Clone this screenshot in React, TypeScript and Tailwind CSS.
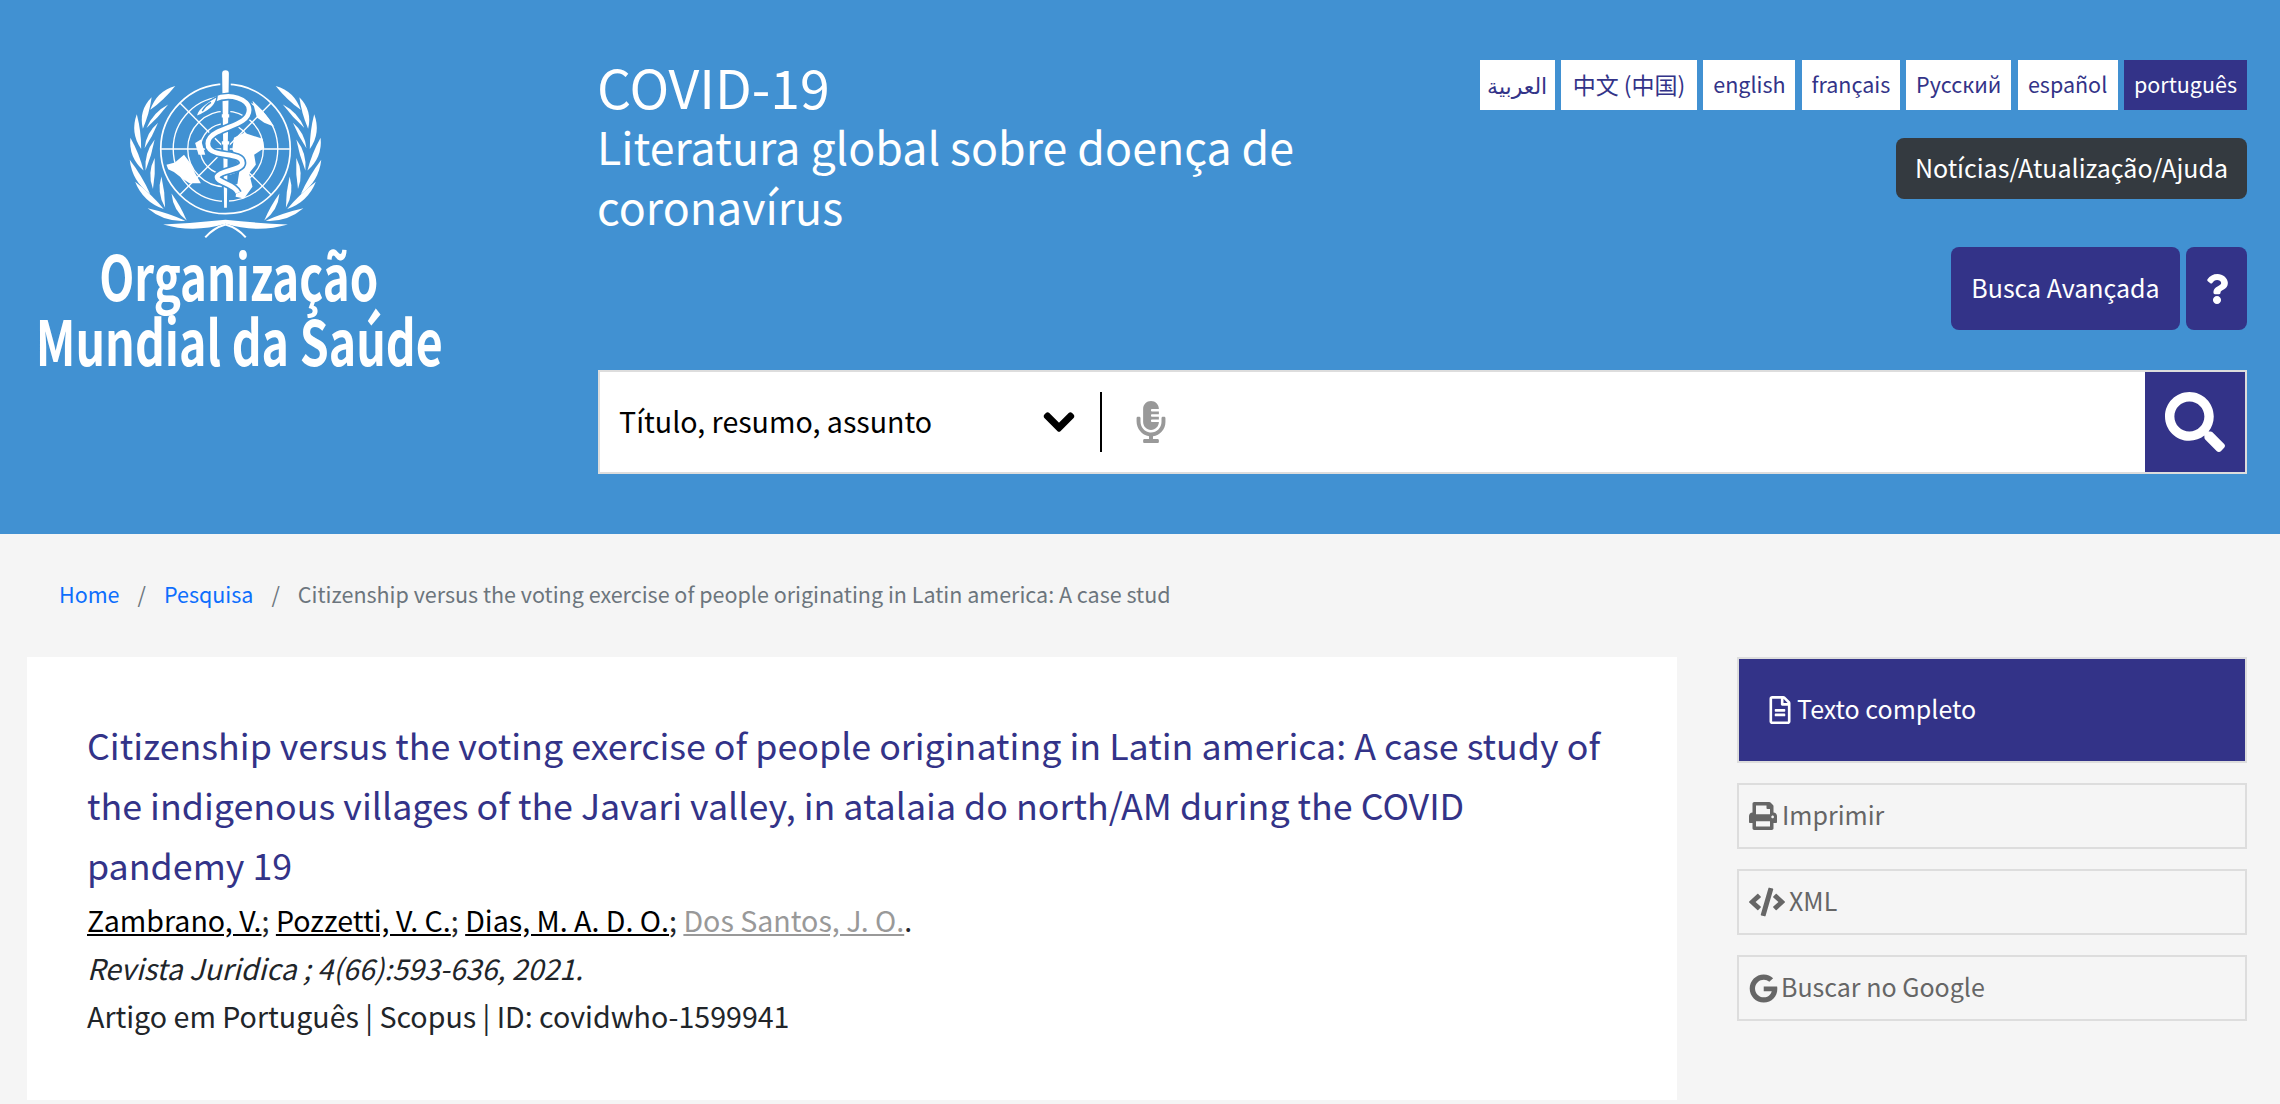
import React from "react";
import {
  FaChevronDown,
  FaCode,
  FaGoogle,
  FaMicrophoneAlt,
  FaPrint,
  FaQuestion,
  FaRegFileAlt,
  FaSearch,
} from "react-icons/fa";

const languages = [
  { name: "العربية", cls: "w-[75px] text-[22px]" },
  { name: "中文 (中国)", cls: "w-[136px] text-[23px]" },
  { name: "english", cls: "w-[92px] text-[21.5px]" },
  { name: "français", cls: "w-[98px] text-[21.5px]" },
  { name: "Русский", cls: "w-[105px] text-[21.5px]" },
  { name: "español", cls: "w-[100px] text-[21.5px]" },
];

// [base x, base y, tip x, tip y, half width] for the left branch
const leaves = [
  [452, 212, 526, 141, 17],
  [430, 268, 456, 175, 17],
  [425, 328, 412, 225, 17],
  [432, 392, 393, 295, 17],
  [452, 462, 391, 360, 17],
  [492, 506, 407, 425, 17],
  [556, 541, 444, 504, 15],
  [441, 266, 505, 196, 11],
  [435, 326, 475, 250, 11],
  [438, 392, 465, 300, 12],
  [460, 447, 465, 355, 13],
  [496, 502, 485, 410, 13],
  [560, 540, 515, 460, 13],
];

const leafPath = ([bx, by, tx, ty, w]: number[]) => {
  const mx = (bx + tx) / 2;
  const my = (by + ty) / 2;
  const len = Math.hypot(tx - bx, ty - by);
  const nx = ((ty - by) / len) * w;
  const ny = (-(tx - bx) / len) * w;
  return `M${bx} ${by} Q${mx + nx * 1.6} ${my + ny * 1.6} ${tx} ${ty} Q${mx - nx * 0.4} ${my - ny * 0.4} ${bx} ${by}Z`;
};

const Laurel = () => (
  <g fill="#fff">
    {leaves.map((l) => (
      <path key={l.join("-")} d={leafPath(l)} />
    ))}
  </g>
);

const snake =
  "M640 182 C690 160 745 180 745 212 C745 250 690 258 650 278 C615 296 612 330 650 340 C680 348 725 345 725 370 C725 392 660 390 650 410 C648 428 700 430 712 458";

const WhoEmblem = () => (
  <svg viewBox="380 85 590 510" className="w-[199px] h-[172px]">
    <Laurel />
    <g transform="translate(1350 0) scale(-1 1)">
      <Laurel />
    </g>
    <path d="M490 552 Q580 578 675 550 Q770 578 860 552 Q770 548 675 538 Q580 548 490 552Z" fill="#fff" />
    <path d="M615 590 Q640 562 675 552 M735 590 Q710 562 675 552" stroke="#fff" strokeWidth="6" fill="none" />
    <g stroke="#fff" fill="none">
      <circle cx="675" cy="328" r="192" strokeWidth="5" />
      <circle cx="675" cy="328" r="155" strokeWidth="4" />
      <circle cx="675" cy="328" r="112" strokeWidth="4" />
      <circle cx="675" cy="328" r="75" strokeWidth="4" />
      <path d="M484 328H866M540 192L810 464M810 192L540 464" strokeWidth="4" />
    </g>
    <g fill="#fff">
      <path d="M500 375 L525 368 L552 345 L572 372 L585 400 L602 430 L568 430 L550 418 L522 396 L505 388Z" />
      <path d="M700 295 L730 280 L785 298 L790 325 L760 345 L765 375 L745 400 L755 440 L730 475 L705 470 L712 420 L720 370 L695 330Z" />
      <path d="M755 185 L785 215 L820 262 L790 250 L768 235Z" />
      <path d="M585 310 L602 300 L615 345 L595 345Z" />
    </g>
    <path d="M662 104 Q662 92 675 92 Q688 92 688 104 L682 505 L668 505Z" fill="#fff" stroke="#4191d2" strokeWidth="6" />
    <path d={snake} fill="none" stroke="#4191d2" strokeWidth="24" />
    <path d={snake} fill="none" stroke="#fff" strokeWidth="14" />
    <path d="M588 232 Q590 205 650 172 Q648 205 602 226Z" fill="#fff" stroke="#4191d2" strokeWidth="4" />
    <path d="M606 216 Q615 200 632 190" stroke="#4191d2" strokeWidth="4" fill="none" />
    <path d="M664 230H686M664 310H686" stroke="#fff" strokeWidth="10" />
  </svg>
);

const sideLinks = [
  { label: "Imprimir", icon: <FaPrint className="text-[28px]" />, cls: "gap-[5px]" },
  { label: "XML", icon: <FaCode className="text-[36px]" />, cls: "gap-[4px]" },
  { label: "Buscar no Google", icon: <FaGoogle className="text-[29px]" />, cls: "gap-[3px]" },
];

export default function App() {
  return (
    <div className="h-[1104px] overflow-hidden bg-[#f5f5f5] text-[#212529] font-['Noto_Sans_CJK_SC','Noto_Sans','DejaVu_Sans',sans-serif]">
      <header className="flex h-[534px] bg-[#4191d2] pr-[33px]">
        <div className="w-[598px] shrink-0 pt-[67px]">
          <div className="ml-[126px]">
            <WhoEmblem />
          </div>
          <div className="mt-[3px] w-[478px] flex flex-col items-center text-white font-bold text-[62px] leading-[65px]">
            <div className="scale-x-[0.735] whitespace-nowrap">Organização</div>
            <div className="scale-x-[0.75] whitespace-nowrap">Mundial da Saúde</div>
          </div>
        </div>
        <div className="flex-1 flex flex-col pt-[60px]">
          <div className="flex justify-between h-[310px]">
            <div className="-mt-[4px] -ml-[1px] text-white text-[44.7px] leading-[60px] w-[760px]">
              <div className="text-[53.5px] leading-[60px]">COVID-19</div>
              <div>Literatura global sobre doença de coronavírus</div>
            </div>
            <div className="flex flex-col items-end">
              <div className="flex gap-[6.4px]">
                {languages.map((l) => (
                  <a key={l.name} className={`${l.cls} h-[50px] pb-[2px] flex items-center justify-center bg-white text-[#333388] whitespace-nowrap`}>
                    {l.name}
                  </a>
                ))}
                <a className="w-[123px] h-[50px] pb-[2px] flex items-center justify-center bg-[#333388] text-white text-[21.5px]">português</a>
              </div>
              <a className="mt-[28px] h-[61px] w-[351px] pb-[1px] flex items-center justify-center rounded-lg bg-[#343a40] text-white text-[25px]">
                Notícias/Atualização/Ajuda
              </a>
              <div className="mt-[48px] flex gap-[6px]">
                <a className="h-[83px] w-[229px] pb-[2px] flex items-center justify-center rounded-lg bg-[#333388] text-white text-[25px]">Busca Avançada</a>
                <a className="h-[83px] w-[61px] flex items-center justify-center rounded-lg bg-[#333388] text-white">
                  <FaQuestion className="text-[30px]" />
                </a>
              </div>
            </div>
          </div>
          <div className="flex h-[104px] bg-white border-[2px] border-[#dddddd]">
            <div className="w-[500px] flex items-center pl-[19px] pr-[24px] justify-between text-[28.6px] text-black">
              <span className="pb-[1px]">Título, resumo, assunto</span>
              <FaChevronDown className="text-[34px]" stroke="currentColor" strokeWidth={24} />
            </div>
            <div className="w-[2px] h-[60px] bg-black self-center"></div>
            <div className="flex-1 flex items-center pl-[28px]">
              <FaMicrophoneAlt className="text-[42px] text-[#999999]" />
            </div>
            <button className="w-[100px] flex items-center justify-center bg-[#333388] text-white">
              <FaSearch className="text-[60px]" />
            </button>
          </div>
        </div>
      </header>

      <nav className="flex items-center h-[123px] pb-[2px] pl-[59px] text-[21.5px] text-[#6c757d]">
        <a className="text-[#0d6efd]">Home</a>
        <span className="px-[18px]">/</span>
        <a className="text-[#0d6efd]">Pesquisa</a>
        <span className="px-[18px]">/</span>
        <span>Citizenship versus the voting exercise of people originating in Latin america: A case stud</span>
      </nav>

      <main className="flex pl-[27px] pr-[33px]">
        <article className="w-[1650px] h-[443px] bg-white pl-[60px] pr-[60px] pt-[57px]">
          <h1 className="mb-[2px] text-[35.8px] leading-[60px] text-[#333388]">
            Citizenship versus the voting exercise of people originating in Latin america: A case study of the indigenous villages of the Javari valley, in atalaia do north/AM during the COVID pandemy 19
          </h1>
          <div className="text-[28.6px] leading-[48px]">
            <div>
              <a className="text-black underline">Zambrano, V.</a>; <a className="text-black underline">Pozzetti, V. C.</a>;{" "}
              <a className="text-black underline">Dias, M. A. D. O.</a>; <a className="text-[#999999] underline">Dos Santos, J. O.</a>.
            </div>
            <div className="italic">Revista Juridica ; 4(66):593-636, 2021.</div>
            <div>Artigo em Português | Scopus | ID: covidwho-1599941</div>
          </div>
        </article>
        <aside className="ml-[60px] flex-1 flex flex-col gap-[20px]">
          <a className="h-[106px] flex items-center gap-[3px] pl-[27px] bg-[#333388] border-[2px] border-[#dddddd] text-white text-[25px]">
            <FaRegFileAlt className="text-[28px]" />
            <span className="pb-[2px]">Texto completo</span>
          </a>
          {sideLinks.map((s) => (
            <a key={s.label} className={`h-[66px] flex items-center ${s.cls} pl-[10px] border-[2px] border-[#dddddd] text-[#666666] text-[25px]`}>
              {s.icon}
              <span className="pb-[2px]">{s.label}</span>
            </a>
          ))}
        </aside>
      </main>
    </div>
  );
}
